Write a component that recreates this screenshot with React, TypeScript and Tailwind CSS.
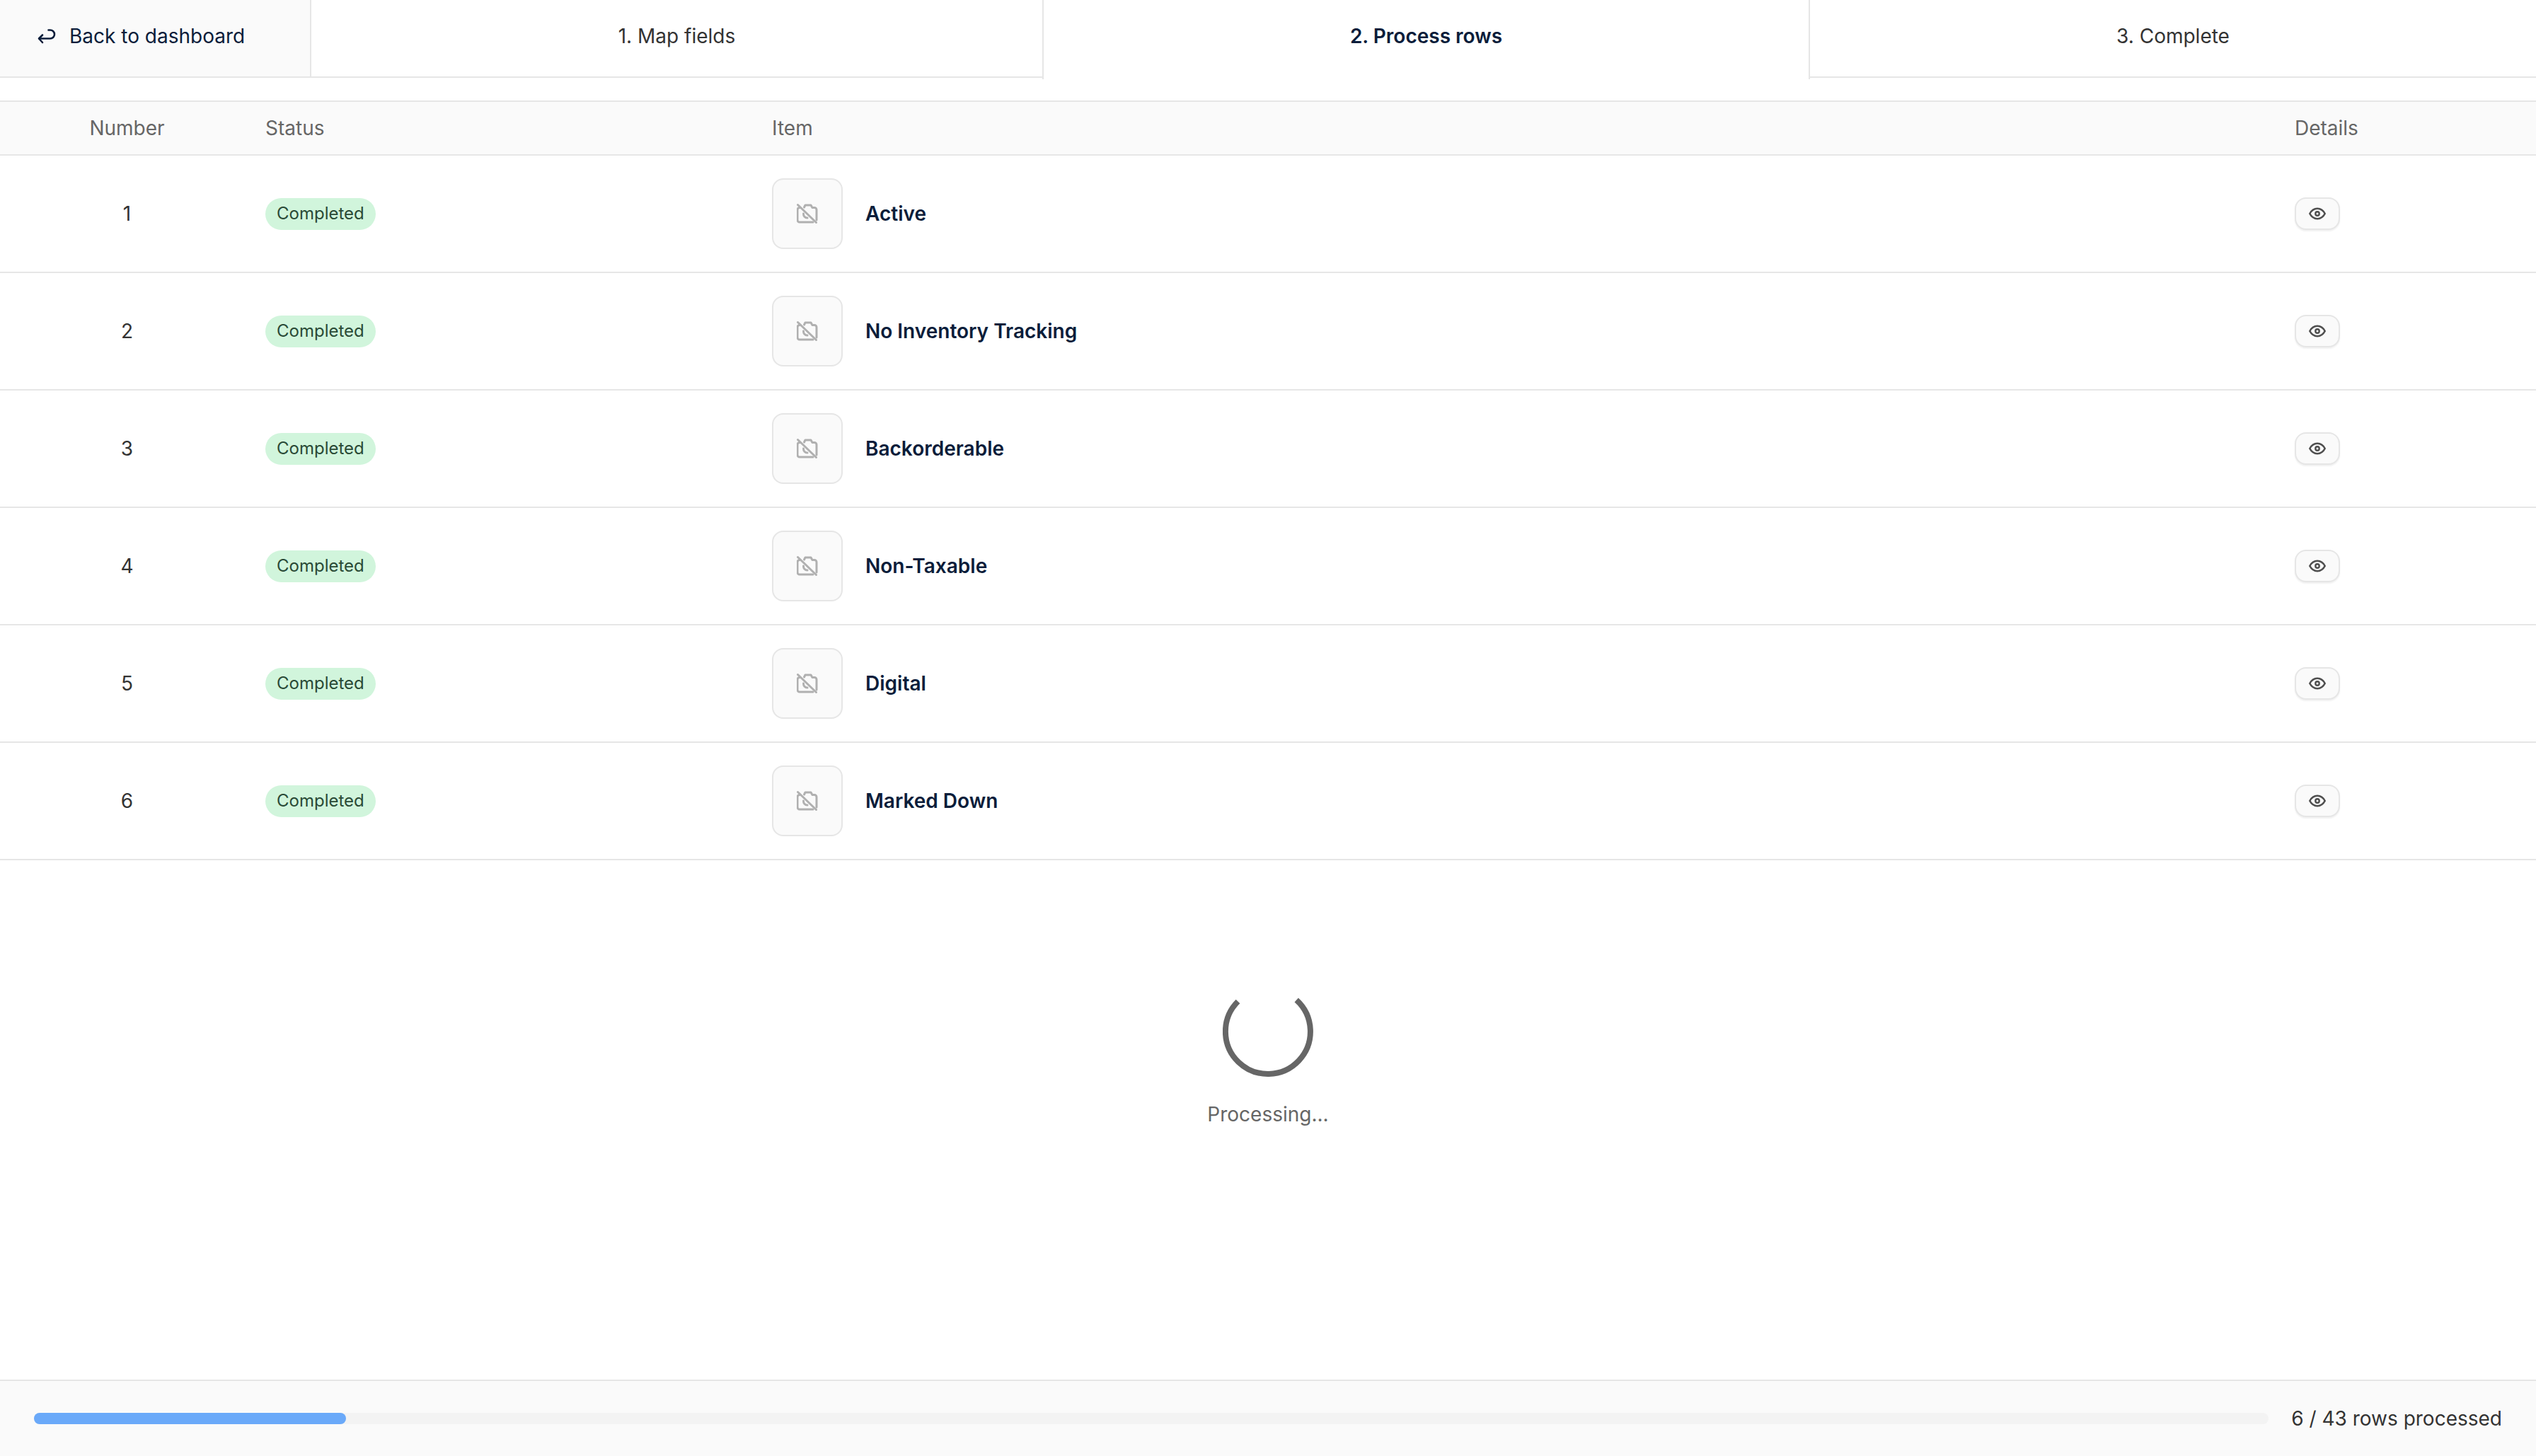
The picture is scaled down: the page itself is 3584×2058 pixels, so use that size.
const rows = ['Active', 'No Inventory Tracking', 'Backorderable', 'Non-Taxable', 'Digital', 'Marked Down']

function BackIcon() {
  return (
    <svg width="28" height="28" viewBox="0 0 28 28" fill="none" stroke="currentColor" strokeWidth="2.6" strokeLinecap="round" strokeLinejoin="round">
      <path d="M8 11.500 3 16.500l5 5.500" />
      <path d="M3.500 16.500H19a6 6 0 0 0 0-12h-2.500" />
    </svg>
  )
}

function NoImageIcon() {
  return (
    <svg width="30" height="30" viewBox="0 0 30 30" fill="none" stroke="#b0b0b0" strokeWidth="3" strokeLinecap="round" strokeLinejoin="round">
      <path d="M4.500 6.500H4a3 3 0 0 0-3 3V24a3 3 0 0 0 3 3h19" />
      <path d="M10.500 6 12 3h8l2 3.500h3a3 3 0 0 1 3 3V24" />
      <path d="M9.500 15a5.500 5.500 0 0 0 5.500 6" />
      <path d="M1.500 2.500 27.500 27.500" />
    </svg>
  )
}

function EyeIcon() {
  return (
    <svg width="28" height="28" viewBox="0 0 28 28" fill="none" stroke="#4f4f4f" strokeWidth="2.6">
      <path d="M3.300 14C5.800 9.300 9.500 6.800 14 6.800S22.200 9.300 24.700 14c-2.500 4.700-6.200 7.200-10.700 7.200S5.800 18.700 3.300 14Z" strokeLinejoin="round" />
      <circle cx="14" cy="14" r="2.700" strokeWidth="2.400" />
    </svg>
  )
}

function Spinner() {
  return (
    <svg width="128" height="128" viewBox="0 0 128 128" fill="none" stroke="#666666" strokeWidth="8">
      <path d="M21.500 21.500A60 60 0 1 0 104.200 19.500" />
    </svg>
  )
}

export default function App() {
  return (
    <div className="flex h-[2058px] w-[3584px] flex-col overflow-hidden bg-white font-['Inter',sans-serif] text-[28px] leading-[40px] text-[#0b1d3a]">
      <div className="flex h-[110px] shrink-0 items-stretch">
        <div className="flex w-[440px] shrink-0 items-start gap-[18px] border-r-2 border-b-2 border-[#e6e6e6] bg-[#fafafa] pl-[52px] pt-[31px]">
          <span className="mt-[7px]"><BackIcon /></span>
          <span>Back to dashboard</span>
        </div>
        <div className="flex w-[1033px] shrink-0 justify-center border-b-2 border-[#e6e6e6] pt-[31px] text-[#333333]">
          <span>1. Map fields</span>
        </div>
        <div className="relative flex h-[112px] w-[1085px] shrink-0 justify-center border-x-2 border-[#e6e6e6] bg-white pt-[31px] font-semibold">
          <span>2. Process rows</span>
        </div>
        <div className="flex flex-1 justify-center border-b-2 border-[#e6e6e6] pt-[31px] text-[#333333]">
          <span>3. Complete</span>
        </div>
      </div>

      <div className="mt-[32px] grid grid-cols-[359px_716px_2152px_1fr]">
        <div className="col-span-4 grid h-[78px] grid-cols-subgrid items-center border-y-2 border-[#e6e6e6] bg-[#fafafa] text-[#666666]">
          <div className="text-center">Number</div>
          <div className="pl-[16px]">Status</div>
          <div className="pl-[16px]">Item</div>
          <div className="pl-[16px]">Details</div>
        </div>
        {rows.map((name, i) => (
          <div key={name} className="col-span-4 grid h-[166px] grid-cols-subgrid items-center border-b-2 border-[#e6e6e6]">
            <div className="text-center text-[#333333]">{i + 1}</div>
            <div className="pl-[16px]">
              <span className="inline-block h-[45px] rounded-full bg-[#d1f5dc] px-[16px] text-[24px] leading-[44px] text-[#2a4a36]">Completed</span>
            </div>
            <div className="flex items-center gap-[32px] pl-[16px]">
              <div className="flex h-[100px] w-[100px] items-center justify-center rounded-[16px] border-2 border-[#e6e6e6] bg-[#fafafa]">
                <NoImageIcon />
              </div>
              <span className="font-semibold">{name}</span>
            </div>
            <div className="pl-[16px]">
              <div className="flex h-[46px] w-[64px] items-center justify-center rounded-[16px] border-2 border-[#e6e6e6] bg-[#fafafa] shadow-[0_2px_2px_rgba(0,0,0,0.06)]">
                <EyeIcon />
              </div>
            </div>
          </div>
        ))}
      </div>

      <div className="flex flex-1 flex-col items-center pt-[178px]">
        <Spinner />
        <div className="mt-[33px] text-[#666666]">Processing...</div>
      </div>

      <div className="flex h-[108px] shrink-0 items-center gap-[32px] border-t-2 border-[#e6e6e6] bg-[#fafafa] px-[48px]">
        <div className="h-[16px] flex-1 rounded-full bg-[#f3f3f3]">
          <div className="h-full rounded-full bg-[#6aa9f9]" style={{ width: `${(6 / 43) * 100}%` }} />
        </div>
        <span className="text-[#333333]">6 / 43 rows processed</span>
      </div>
    </div>
  )
}
